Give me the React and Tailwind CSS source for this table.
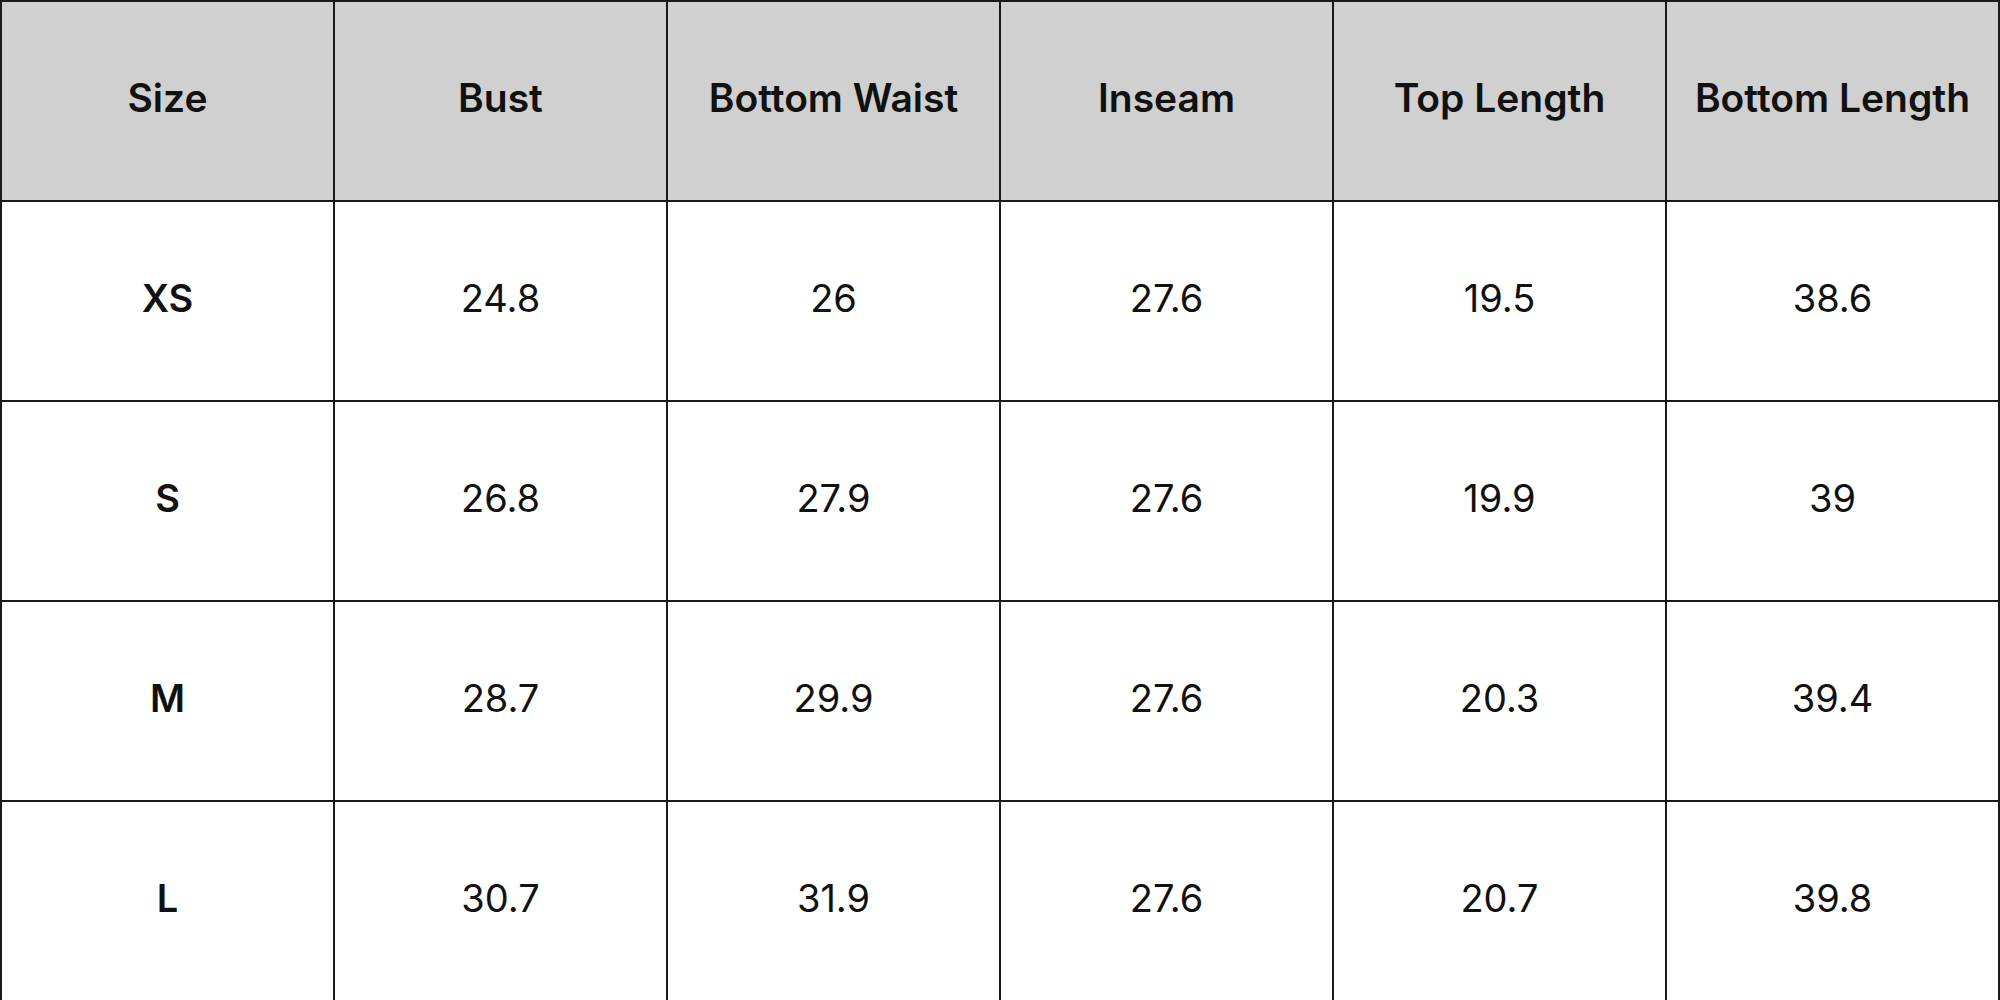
import React from 'react';

const headers = ['Size', 'Bust', 'Bottom Waist', 'Inseam', 'Top Length', 'Bottom Length'];

const rows = [
  ['XS', '24.8', '26', '27.6', '19.5', '38.6'],
  ['S', '26.8', '27.9', '27.6', '19.9', '39'],
  ['M', '28.7', '29.9', '27.6', '20.3', '39.4'],
  ['L', '30.7', '31.9', '27.6', '20.7', '39.8'],
];

const SizeChart = () => {
  return (
    <div className="w-[2000px] h-[1000px] bg-white overflow-hidden" style={{ fontFamily: 'Inter, "Open Sans", sans-serif' }}>
      <table className="w-full h-full border-collapse table-fixed text-[#111111]">
        <thead>
          <tr className="bg-[#d0d0d0]">
            {headers.map((h) => (
              <th key={h} className="h-[200px] pb-[5px] border-2 border-[#1a1a1a] text-center text-[39px] font-semibold">
                {h}
              </th>
            ))}
          </tr>
        </thead>
        <tbody>
          {rows.map((row) => (
            <tr key={row[0]}>
              {row.map((cell, idx) => (
                <td
                  key={idx}
                  className={`h-[200px] pb-[5px] border-2 border-[#1a1a1a] text-center text-[38px] ${idx === 0 ? 'font-semibold' : 'font-normal'}`}
                >
                  {cell}
                </td>
              ))}
            </tr>
          ))}
        </tbody>
      </table>
    </div>
  );
};

export default function App() {
  return <SizeChart />;
}
